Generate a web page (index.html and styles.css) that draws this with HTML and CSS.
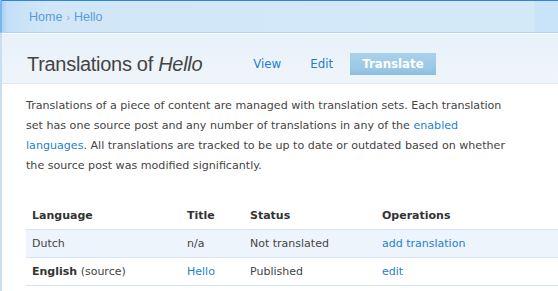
FILE: index.html
```html
<!DOCTYPE html>
<html lang="en">
  <head>
    <meta charset="UTF-8" />
    <meta name="viewport" content="width=device-width, initial-scale=1.0" />
    <title>Translations of Hello</title>
    <link rel="stylesheet" href="styles.css">
  </head>
  <body>
    <div class="page">
      <div class="breadcrumb">
        <a href="#">Home</a> <span class="sep">›</span> <a href="#">Hello</a>
      </div>

      <div class="header">
        <h1 class="title">Translations of <em>Hello</em></h1>
        <ul class="tabs">
          <li><a href="#">View</a></li>
          <li><a href="#">Edit</a></li>
          <li class="active"><a href="#">Translate</a></li>
        </ul>
      </div>

      <div class="content">
        <p class="intro">
          Translations of a piece of content are managed with translation sets. Each translation
          set has one source post and any number of translations in any of the
          <a href="#">enabled languages</a>. All translations are tracked to be up to date or
          outdated based on whether the source post was modified significantly.
        </p>

        <table class="translations">
          <thead>
            <tr>
              <th class="col-lang">Language</th>
              <th class="col-title">Title</th>
              <th class="col-status">Status</th>
              <th>Operations</th>
            </tr>
          </thead>
          <tbody>
            <tr class="odd">
              <td>Dutch</td>
              <td>n/a</td>
              <td>Not translated</td>
              <td><a href="#">add translation</a></td>
            </tr>
            <tr class="even">
              <td><strong>English</strong> (source)</td>
              <td><a href="#">Hello</a></td>
              <td>Published</td>
              <td><a href="#">edit</a></td>
            </tr>
          </tbody>
        </table>
      </div>
    </div>
  </body>
</html>
```

FILE: styles.css
```css
html {
  box-sizing: border-box;
  font-family: "DejaVu Sans", Verdana, sans-serif;
  font-size: 11px;
}

*,
*:before,
*:after {
  box-sizing: inherit;
}

body {
  margin: 0;
  padding: 0;
  overflow: hidden;
  background: #fff;
  color: #444;
}

a {
  color: #1f7fcf;
  text-decoration: none;
}

/* **********Estructura********** */
.page {
  min-height: 100vh;
  border-top: 1px solid #2f86dc;
  border-left: 2px solid #c8dff2;
}

.breadcrumb {
  height: 32px;
  margin-left: -2px;
  padding-left: 27px;
  display: flex;
  align-items: center;
  gap: 4px;
  font-family: "Liberation Sans", Arial, sans-serif;
  font-size: 12.5px;
  color: #7fb2e0;
  background: linear-gradient(to right, #a9d1f3 0, #c4e0f7 6px, #d1e7f8 45px, #d4e9f8 calc(100% - 24px), #c9e4f8 calc(100% - 23px));
  border-left: 2px solid #7ab6ec;
  border-bottom: 1px solid #b3d3ef;
}

.breadcrumb a {
  color: #5c9bd6;
}

.breadcrumb .sep {
  font-size: 11px;
}

.header {
  display: flex;
  align-items: center;
  padding: 19px 0 8px 25px;
  border-top: 1px solid #fff;
  border-bottom: 1px solid #dde8f1;
  background: linear-gradient(#e8f1f9, #eff5fa);
}

.title {
  margin: 0 39px 0 0;
  font-family: "Liberation Sans", Arial, sans-serif;
  font-size: 20px;
  font-weight: normal;
  letter-spacing: -0.3px;
  line-height: 22px;
  color: #444;
}

.tabs {
  display: flex;
  gap: 5px;
  margin: 0;
  padding: 0;
  list-style: none;
}

.tabs a {
  display: block;
  height: 22px;
  padding: 0 12px;
  line-height: 22px;
  font-size: 11.8px;
  color: #1f7fcf;
}

.tabs .active a {
  color: #fff;
  font-weight: bold;
  background: linear-gradient(#aad1eb, #9ac8e6 70%, #8bbde0);
}

/* **********Contenido********** */
.content {
  padding: 0 0 0 24px;
}

.intro {
  width: 492px;
  margin: 12px 0 26px;
  font-size: 11.1px;
  line-height: 20px;
}

.translations {
  width: 100%;
  border-collapse: collapse;
}

.translations th,
.translations td {
  padding: 7px 6px;
  line-height: 13px;
  text-align: left;
}

.translations th {
  color: #333;
  font-weight: bold;
}

.translations td strong {
  color: #333;
}

.col-lang {
  width: 155px;
}

.col-title {
  width: 63px;
}

.col-status {
  width: 132px;
}

.translations tbody tr {
  border-top: 1px solid #d5e5f3;
  border-bottom: 1px solid #d5e5f3;
}

.translations tr.odd {
  background: #edf4fb;
}
```
